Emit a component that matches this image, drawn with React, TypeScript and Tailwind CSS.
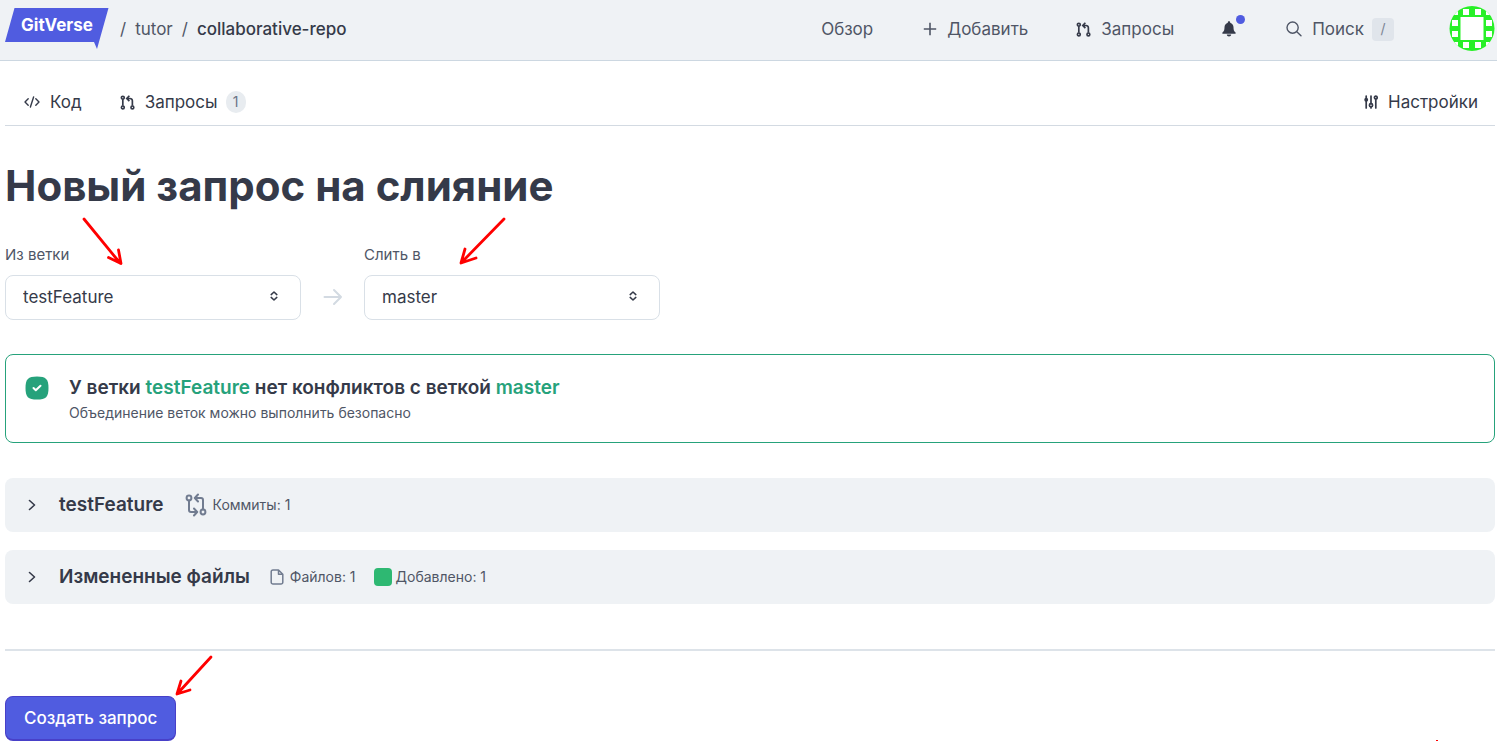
import type { ReactNode } from "react";

type IconProps = { className?: string };

function PullRequestIcon({ className }: IconProps) {
  return (
    <svg viewBox="0 0 16 16" className={className} fill="none" stroke="currentColor" strokeWidth="1.8" aria-hidden="true">
      <circle cx="3" cy="2.800" r="1.500" />
      <circle cx="3" cy="13.200" r="1.500" />
      <circle cx="13.200" cy="13.200" r="1.500" />
      <path d="M3 4.500v7M13.200 11.500V6.200a2.500 2.500 0 0 0-2.500-2.500H8M10 .8 7.200 3.700 10 6.500" />
    </svg>
  );
}

function CompareIcon({ className }: IconProps) {
  return (
    <svg viewBox="0 0 22 24" className={className} fill="none" stroke="currentColor" strokeWidth="2" strokeLinecap="round" strokeLinejoin="round" aria-hidden="true">
      <circle cx="4" cy="5" r="2.400" />
      <circle cx="18" cy="19" r="2.400" />
      <path d="M4 7.500V17a2 2 0 0 0 2 2h5.500M9 15.500 12.200 19 9 22.500M18 16.500V7a2 2 0 0 0-2-2h-5.500M13 1.500 9.800 5 13 8.500" />
    </svg>
  );
}

function CodeIcon({ className }: IconProps) {
  return (
    <svg viewBox="0 0 16 12" className={className} fill="none" stroke="currentColor" strokeWidth="1.4" strokeLinecap="round" strokeLinejoin="round" aria-hidden="true">
      <path d="M4.200 2.800 1 6l3.200 3.200M11.800 2.800 15 6l-3.200 3.200M9.600 1 6.400 11" />
    </svg>
  );
}

function PlusIcon({ className }: IconProps) {
  return (
    <svg viewBox="0 0 14 14" className={className} fill="none" stroke="currentColor" strokeWidth="1.6" aria-hidden="true">
      <path d="M7 .8v12.400M.8 7h12.400" />
    </svg>
  );
}

function BellIcon({ className }: IconProps) {
  return (
    <svg viewBox="0 0 14 16" className={className} fill="currentColor" aria-hidden="true">
      <path d="M7 .3c.7 0 1.200.5 1.200 1.200v.3c2 .6 3.300 2.300 3.300 4.400 0 2.600.5 4 2 5.300.4.400.2 1.300-.5 1.300H1c-.7 0-.9-.9-.5-1.300 1.500-1.300 2-2.700 2-5.300 0-2.100 1.300-3.800 3.300-4.400v-.3C5.800.8 6.300.3 7 .3ZM4.800 13.600h4.400c0 1.200-1 2-2.200 2s-2.200-.8-2.200-2Z" />
    </svg>
  );
}

function SearchIcon({ className }: IconProps) {
  return (
    <svg viewBox="0 0 16 16" className={className} fill="none" stroke="currentColor" strokeWidth="1.400" strokeLinecap="round" aria-hidden="true">
      <circle cx="6.600" cy="6.600" r="5.600" />
      <path d="m10.800 10.800 4.200 4" />
    </svg>
  );
}

function SlidersIcon({ className }: IconProps) {
  return (
    <svg viewBox="0 0 14 14" className={className} fill="none" stroke="currentColor" strokeWidth="1.700" strokeLinecap="round" aria-hidden="true">
      <path d="M2.200 1v12M7 1v7.400M7 12.500v.5M11.800 4.200V13" />
      <circle cx="2.200" cy="4.700" r="1.100" fill="currentColor" />
      <circle cx="7" cy="10.300" r="1.600" />
      <circle cx="11.800" cy="2.600" r="1.400" />
    </svg>
  );
}

function UpDownIcon({ className }: IconProps) {
  return (
    <svg viewBox="0 0 8 10" className={className} fill="none" stroke="currentColor" strokeWidth="1.500" strokeLinecap="round" strokeLinejoin="round" aria-hidden="true">
      <path d="M1.200 3.600 4 1l2.800 2.600M1.200 6.400 4 9l2.800-2.600" />
    </svg>
  );
}

function ArrowRightIcon({ className }: IconProps) {
  return (
    <svg viewBox="0 0 20 18" className={className} fill="none" stroke="currentColor" strokeWidth="2" strokeLinecap="round" strokeLinejoin="round" aria-hidden="true">
      <path d="M1.500 9h16.500M11 2l7 7-7 7" />
    </svg>
  );
}

function ChevronIcon({ className }: IconProps) {
  return (
    <svg viewBox="0 0 8 12" className={className} fill="none" stroke="currentColor" strokeWidth="1.600" strokeLinecap="round" strokeLinejoin="round" aria-hidden="true">
      <path d="m1.500 1.500 5 4.500-5 4.500" />
    </svg>
  );
}

function FileIcon({ className }: IconProps) {
  return (
    <svg viewBox="0 0 14 16" className={className} fill="none" stroke="currentColor" strokeWidth="1.500" strokeLinejoin="round" aria-hidden="true">
      <path d="M8.500 1H3a1.800 1.800 0 0 0-1.800 1.800v10.400A1.800 1.800 0 0 0 3 15h8a1.800 1.800 0 0 0 1.800-1.800V5.200ZM8.500 1v4.200h4.300" />
    </svg>
  );
}

function SuccessIcon({ className }: IconProps) {
  return (
    <svg viewBox="0 0 24 24" className={className} aria-hidden="true">
      <path d="M12 .5c9 0 11.500 2.500 11.500 11.500S21 23.500 12 23.500.5 21 .5 12 3 .5 12 .5Z" fill="#26a27b" />
      <path d="m8.500 12 2.300 2.300 4.700-4.600" fill="none" stroke="#fff" strokeWidth="2" strokeLinecap="round" strokeLinejoin="round" />
    </svg>
  );
}

function Logo() {
  return (
    <a href="#" className="relative block h-[42px] w-[104px] text-white">
      <svg viewBox="0 0 104 42" className="block h-[42px] w-[104px]" aria-hidden="true">
        <path d="M9.500 0H103.500L92 41l-3-7H0Z" fill="#505ce0" />
      </svg>
      <span className="absolute inset-x-0 top-0 text-center text-[17px] leading-[34px] font-bold">GitVerse</span>
    </a>
  );
}

function Avatar() {
  const cells = [
    [3, 3], [14, 3], [26, 3], [37, 3],
    [3, 14], [37, 14], [3, 25], [37, 25],
    [3, 36], [14, 36], [26, 36], [37, 36],
  ];
  return (
    <svg viewBox="0 0 46 46" className="size-[46px]" role="img" aria-label="Профиль">
      <clipPath id="avatar-clip">
        <circle cx="23" cy="22.500" r="22.500" />
      </clipPath>
      <g clipPath="url(#avatar-clip)">
        <rect width="46" height="46" fill="#28f028" />
        <g fill="#fff">
          <rect x="11.500" y="11" width="23" height="23" />
          {cells.map(([x, y]) => (
            <rect key={`${x}-${y}`} x={x} y={y} width="6" height="6" />
          ))}
        </g>
      </g>
    </svg>
  );
}

function Label({ children }: { children: ReactNode }) {
  return <span className="pt-0.5">{children}</span>;
}

function BranchSelect({ id, label, value }: { id: string; label: string; value: string }) {
  return (
    <div className="flex w-[296px] flex-col gap-2">
      <label htmlFor={id} className="text-[15px] leading-6 text-[#4f5666]">{label}</label>
      <div className="relative">
        <select id={id} defaultValue={value} className="h-[45px] w-full appearance-none rounded-lg border border-[#d9e0e7] bg-white px-[17px] text-[17px] text-[#353a49]">
          <option>testFeature</option>
          <option>master</option>
        </select>
        <UpDownIcon className="pointer-events-none absolute top-4 right-[23px] h-2.5 w-2 text-[#353a49]" />
      </div>
    </div>
  );
}

function Panel({ title, children }: { title: string; children: ReactNode }) {
  return (
    <button type="button" className="flex h-[54px] w-full items-center rounded-lg bg-[#eff2f5] pl-[23px] text-left">
      <ChevronIcon className="mr-[23px] h-3 w-2 text-[#353a49]" />
      <span className="text-[19px] font-semibold text-[#353a49]">{title}</span>
      {children}
    </button>
  );
}

export default function App() {
  return (
    <div className="font-[Inter,'Noto_Sans',sans-serif] text-[#353a49]">
      <header className="flex h-[61px] items-center border-b border-[#ccd7e1] bg-[#eff2f5] pr-0.5 pb-0.5 pl-[5px] text-[17px]">
        <Logo />
        <nav aria-label="Путь" className="ml-[11px] flex items-center gap-[9px] pt-0.5 text-[#4f5666]">
          <span>/</span>
          <a href="#">tutor</a>
          <span>/</span>
          <a href="#" className="font-medium text-[#353a49]">collaborative-repo</a>
        </nav>
        <nav aria-label="Главное меню" className="ml-auto flex items-center text-[#4f5666]">
          <a href="#" className="flex"><Label>Обзор</Label></a>
          <a href="#" className="ml-[50px] flex items-center gap-2.5"><PlusIcon className="size-3.5" /><Label>Добавить</Label></a>
          <a href="#" className="ml-12 flex items-center gap-2.5"><PullRequestIcon className="size-[15px] text-[#353a49]" /><Label>Запросы</Label></a>
          <button type="button" aria-label="Уведомления" className="relative ml-12 text-[#353a49]">
            <BellIcon className="block h-4 w-3.5" />
            <span className="absolute -top-1.5 left-3.5 size-[9px] rounded-full bg-[#505ce0]" />
          </button>
          <button type="button" className="ml-[50px] flex items-center gap-2.5">
            <SearchIcon className="size-4" /><Label>Поиск</Label>
            <kbd className="-ml-0.5 flex h-[23px] w-[22px] items-center justify-center rounded bg-[#e0e5eb] font-[Inter] text-sm text-[#7b8494]">/</kbd>
          </button>
          <a href="#" className="ml-[55px]"><Avatar /></a>
        </nav>
      </header>

      <main className="pr-0.5 pl-[5px]">
        <nav aria-label="Репозиторий" className="flex h-[65px] items-center border-b border-[#d3dae2] pt-[18px] pr-[17px] pl-[19px] text-[17px]">
          <a href="#" className="flex items-center gap-2.5"><CodeIcon className="h-3 w-4" /><Label>Код</Label></a>
          <a href="#" className="ml-[38px] flex items-center gap-2.5">
            <PullRequestIcon className="size-[15px]" /><Label>Запросы</Label>
            <span className="-ml-0.5 flex h-[22px] w-5 items-center justify-center rounded-full bg-[#e8ecf0] text-sm text-[#6b7486]">1</span>
          </a>
          <a href="#" className="ml-auto flex items-center gap-2.5"><SlidersIcon className="size-3.5" /><Label>Настройки</Label></a>
        </nav>

        <h1 className="mt-8 text-[42px] leading-[56px] font-bold">Новый запрос на слияние</h1>

        <div className="relative mt-[29px] flex items-end">
          <BranchSelect id="source" label="Из ветки" value="testFeature" />
          <ArrowRightIcon className="mr-[21px] mb-3.5 ml-[22px] h-[18px] w-5 text-[#d3dae2]" />
          <BranchSelect id="target" label="Слить в" value="master" />
          <svg viewBox="0 0 440 50" className="pointer-events-none absolute bottom-[54px] left-[75px] h-[50px] w-[440px]" fill="none" stroke="#f00" strokeWidth="2.800" strokeLinecap="round" strokeLinejoin="round" aria-hidden="true">
            <path d="m4 3 36 44M28.500 41.500 41 47.500 38.500 34M424 3 382 46M396 42 381 47l4-14" />
          </svg>
        </div>

        <section className="mt-[34px] flex h-[89px] items-start rounded-lg border border-[#26a27b] pt-5 pl-[19px]">
          <SuccessIcon className="mt-px size-6" />
          <div className="ml-5">
            <h2 className="text-[19px] leading-[26px] font-semibold">
              У ветки <span className="text-[#26a27b]">testFeature</span> нет конфликтов с веткой <span className="text-[#26a27b]">master</span>
            </h2>
            <p className="mt-0.5 text-sm leading-5 text-[#4f5666]">Объединение веток можно выполнить безопасно</p>
          </div>
        </section>

        <div className="mt-[35px] flex flex-col gap-[18px] text-sm text-[#4f5666]">
          <Panel title="testFeature">
            <CompareIcon className="ml-[21px] h-6 w-[22px] text-[#717c90]" />
            <span className="ml-1.5">Коммиты: 1</span>
          </Panel>
          <Panel title="Измененные файлы">
            <FileIcon className="ml-5 h-4 w-3.5 text-[#717c90]" />
            <span className="ml-1.5">Файлов: 1</span>
            <span className="ml-[18px] size-[18px] rounded bg-[#2eb872]" />
            <span className="ml-1">Добавлено: 1</span>
          </Panel>
        </div>

        <div className="relative mt-[45px] border-t-2 border-[#dde3e9] pt-[45px]">
          <button type="button" className="h-[45px] rounded-lg border border-b-2 border-[#4840c8] bg-[#505ce0] px-[18px] pt-px text-[17px] font-medium text-white">Создать запрос</button>
          <svg viewBox="0 0 42 44" className="pointer-events-none absolute top-1 left-[168px] h-11 w-[42px]" fill="none" stroke="#f00" strokeWidth="2.800" strokeLinecap="round" strokeLinejoin="round" aria-hidden="true">
            <path d="M38 2 5 38M17 35 4 39l4-13" />
          </svg>
          <span className="absolute right-[57px] bottom-0 h-px w-0.5 bg-[#f00]" />
        </div>
      </main>
    </div>
  );
}
